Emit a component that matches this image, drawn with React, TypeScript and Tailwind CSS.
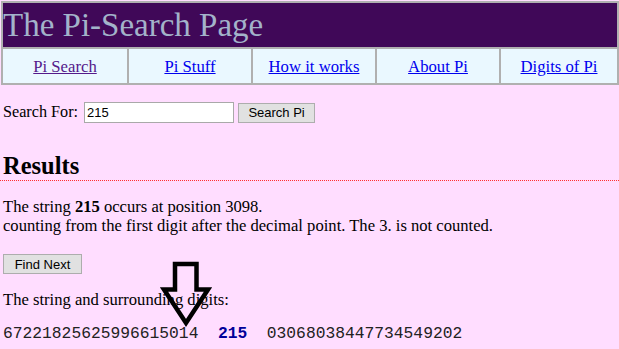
import React from "react";

const navItems = ["Pi Search", "Pi Stuff", "How it works", "About Pi", "Digits of Pi"];

export default function App() {
  return (
    <div className="relative w-[619px] h-[349px] overflow-hidden bg-[#ffddff] text-black font-['Liberation_Serif',serif]">
      <div className="mt-px ml-px w-[618px] border-2 border-[#b0b0b0] bg-[#b0b0b0] flex flex-col gap-[2px]">
        <div className="h-[44px] bg-[#400858] pt-[6px] text-[33px] leading-[33px] text-[#a3b3ca] whitespace-nowrap">
          The Pi-Search Page
        </div>
        <div className="grid grid-cols-[124px_122px_122px_122px_1fr] gap-[2px] h-[34px]">
          {navItems.map((t, i) => (
            <div key={t} className="bg-[#eaf8ff] flex items-center justify-center">
              <a
                href="#"
                className={
                  "text-[16.7px] leading-[19px] underline whitespace-nowrap " +
                  (i === 0 ? "text-[#551a8b]" : "text-[#0000ee]")
                }
              >
                {t}
              </a>
            </div>
          ))}
        </div>
      </div>

      <div className="mt-[17px] pl-[3px] flex items-center h-[21px]">
        <span className="text-[16.2px] leading-[21px] whitespace-nowrap">Search For:</span>
        <div className="ml-[6px] w-[150px] h-[21px] border border-[#a9a9a9] bg-white flex items-center px-[2px] font-['Liberation_Sans',sans-serif] text-[13px] leading-[15px]">
          215
        </div>
        <div className="ml-[4px] h-[20px] w-[77px] border border-[#adadad] bg-[#e1e1e1] flex items-center justify-center font-['Liberation_Sans',sans-serif] text-[13px] leading-[15px]">
          Search Pi
        </div>
      </div>

      <h2 className="mt-[28px] pl-[3px] text-[24.5px] leading-[29px] font-bold border-b border-dotted border-[#ff3030]">
        Results
      </h2>

      <div className="mt-[16px] pl-[3px] text-[16.6px] leading-[19px]">
        <div>
          The string <b>215</b> occurs at position 3098.
        </div>
        <div>counting from the first digit after the decimal point. The 3. is not counted.</div>
      </div>

      <div className="mt-[19px] ml-[3px] h-[20px] w-[79px] border border-[#adadad] bg-[#e1e1e1] flex items-center justify-center font-['Liberation_Sans',sans-serif] text-[13px] leading-[15px]">
        Find Next
      </div>

      <div className="mt-[16px] pl-[3px] text-[16.6px] leading-[19px]">The string and surrounding digits:</div>

      <div className="mt-[15px] pl-[3px] font-['Liberation_Mono',monospace] text-[16.3px] leading-[20px] whitespace-pre text-[#222]">
        {"67221825625996615014  "}
        <b className="text-[#000099]">215</b>
        {"  03068038447734549202"}
      </div>

      <svg className="absolute left-[160px] top-[255px]" width="60" height="75" viewBox="0 0 60 75">
        <polygon
          points="15,9 36.5,9 36.5,34.5 48,34.5 26,68 4,34.5 15,34.5"
          fill="none"
          stroke="black"
          strokeWidth="4.5"
          strokeLinejoin="miter"
        />
      </svg>
    </div>
  );
}
